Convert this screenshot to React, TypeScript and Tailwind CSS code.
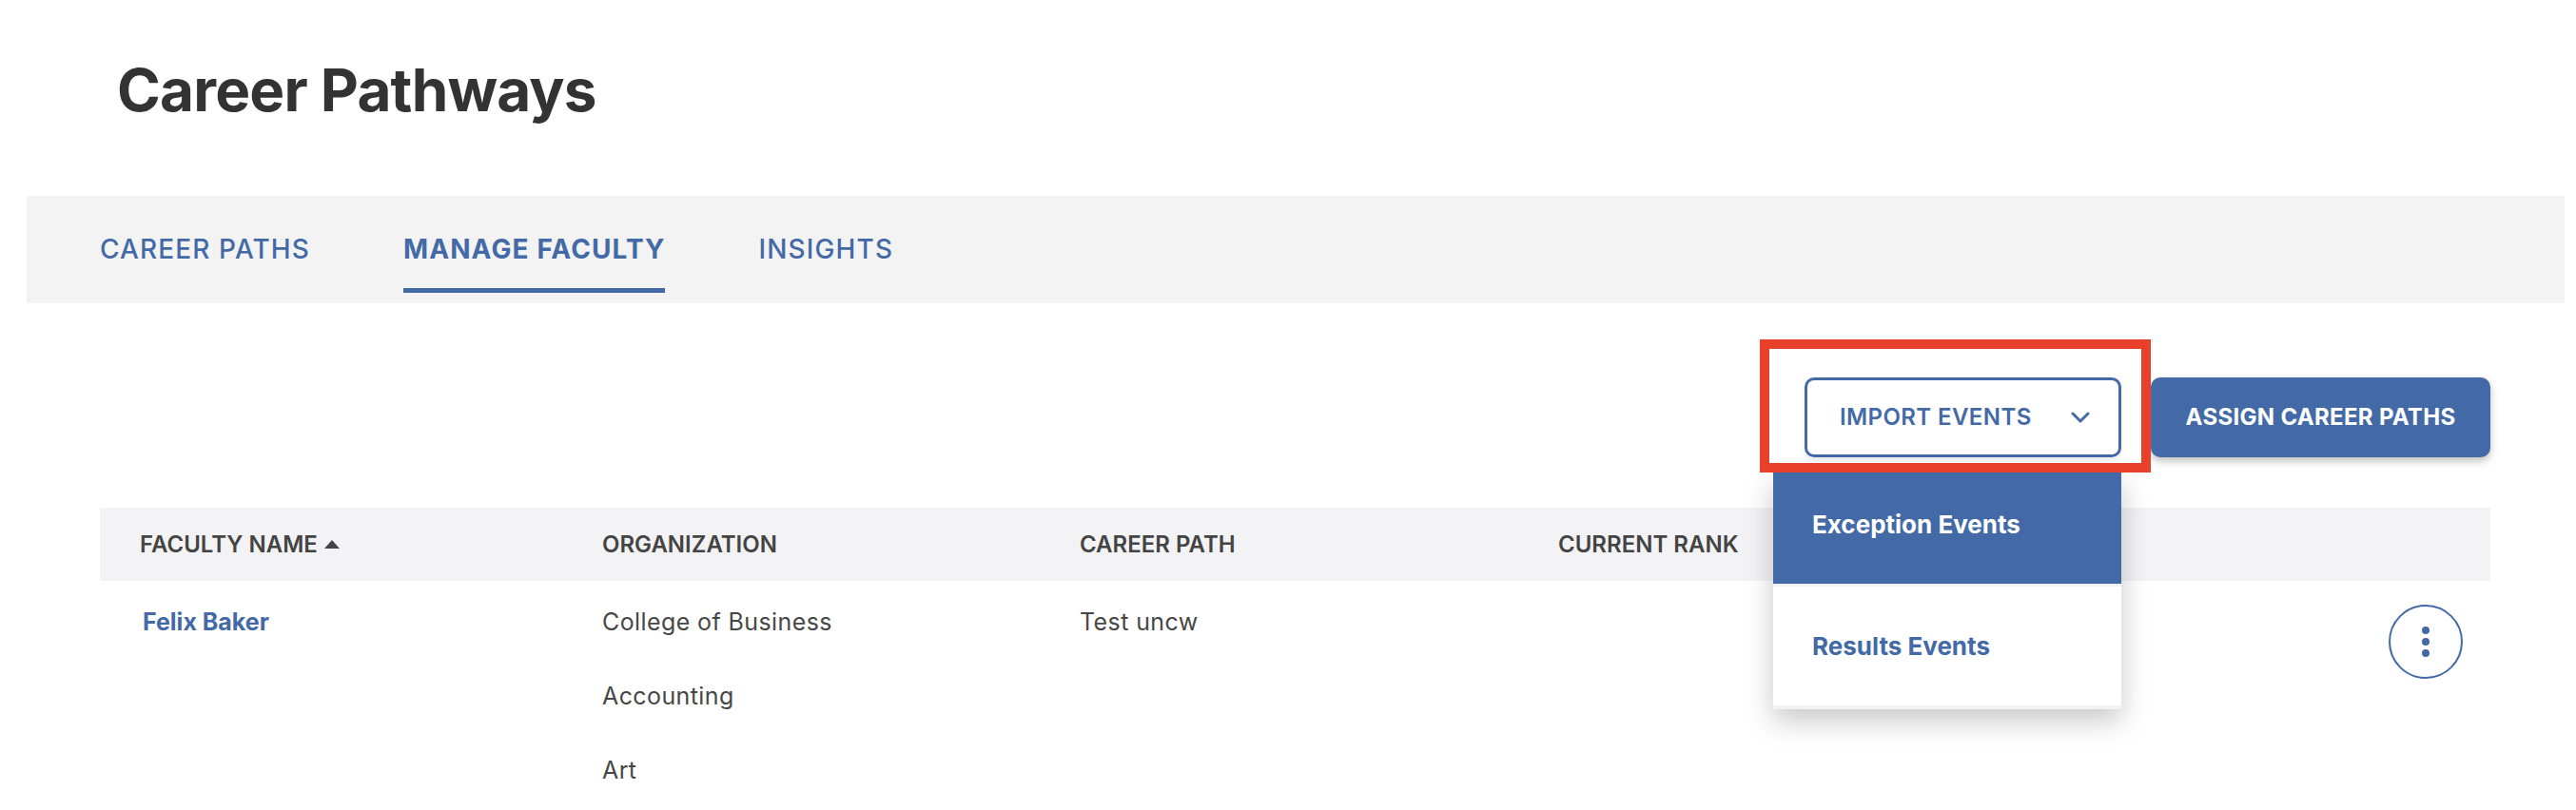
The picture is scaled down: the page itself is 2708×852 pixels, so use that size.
import React from "react";

const BLUE = "#436aa6";

function Chevron() {
  return (
    <svg width="20" height="12" viewBox="0 0 20 12" fill="none">
      <polyline points="2,2 10,10 18,2" stroke={BLUE} strokeWidth="3" strokeLinecap="round" strokeLinejoin="round" />
    </svg>
  );
}

function SortUp() {
  return (
    <svg width="16" height="9" viewBox="0 0 16 9" className="ml-[7px]">
      <polygon points="8,0 16,9 0,9" fill="#444" />
    </svg>
  );
}

function Tabs() {
  const tabs = [
    { label: "CAREER PATHS", active: false },
    { label: "MANAGE FACULTY", active: true },
    { label: "INSIGHTS", active: false },
  ];
  return (
    <nav className="mt-[80px] ml-[28px] mr-[12px] h-[113px] bg-[#f3f3f3] flex gap-[98px] pl-[77px]">
      {tabs.map((t) => (
        <div key={t.label} className="flex flex-col pt-[42px]">
          <span className={`text-[28px] leading-none tracking-[1.1px] text-[#436aa6] ${t.active ? "font-bold" : "font-medium"}`}>
            {t.label}
          </span>
          <div className={`mt-[27px] h-[5px] mr-[1px] ${t.active ? "bg-[#436aa6]" : "bg-transparent"}`} />
        </div>
      ))}
    </nav>
  );
}

function ImportMenu() {
  return (
    <div className="relative">
      <button className="h-[84px] w-[333px] rounded-[10px] border-[3px] border-[#436aa6] bg-white shadow-[0_4px_6px_rgba(0,0,0,0.08)] flex items-center justify-between pl-[34px] pr-[30px]">
        <span className="text-[24px] font-semibold leading-none tracking-[0.4px] text-[#436aa6]">IMPORT EVENTS</span>
        <Chevron />
      </button>
      {/* dropdown */}
      <div className="absolute left-[-33px] top-[100px] z-10 w-[366px] bg-[#f3f3f3] flex flex-col gap-[3px] pb-[4px] shadow-[0_12px_28px_rgba(0,0,0,0.22)]">
        <div className="h-[117px] bg-[#436aa6] flex items-center pl-[41px] pb-[8px]">
          <span className="text-[26px] font-bold leading-none text-white">Exception Events</span>
        </div>
        <div className="h-[125px] bg-white flex items-center pl-[41px]">
          <span className="text-[26px] font-bold leading-none text-[#436aa6]">Results Events</span>
        </div>
      </div>
      {/* highlight box */}
      <div className="absolute left-[-47px] top-[-40px] z-20 w-[411px] h-[140px] border-[10px] border-[#e8402b] pointer-events-none" />
    </div>
  );
}

function Kebab() {
  return (
    <button className="w-[78px] h-[78px] rounded-full border-2 border-[#436aa6] flex flex-col items-center justify-center gap-[4px]">
      <span className="w-[8px] h-[8px] rounded-full bg-[#436aa6]" />
      <span className="w-[8px] h-[8px] rounded-full bg-[#436aa6]" />
      <span className="w-[8px] h-[8px] rounded-full bg-[#436aa6]" />
    </button>
  );
}

function FacultyTable() {
  const cols = "grid grid-cols-[486px_502px_503px_1fr] pl-[42px]";
  return (
    <div className="mt-[53px]">
      <div className={`${cols} h-[77px] items-center bg-[#f3f3f5] text-[24px] font-semibold leading-none text-[#444]`}>
        <div className="flex items-center">
          FACULTY NAME
          <SortUp />
        </div>
        <div>ORGANIZATION</div>
        <div>CAREER PATH</div>
        <div>CURRENT RANK</div>
      </div>
      <div className={`${cols} text-[25px] leading-none tracking-[0.4px] text-[#474747]`}>
        <div className="pt-[31px] pl-[3px] font-bold tracking-normal text-[#436aa6]">Felix Baker</div>
        <div className="pt-[31px] flex flex-col gap-[53px]">
          <span>College of Business</span>
          <span>Accounting</span>
          <span>Art</span>
        </div>
        <div className="pt-[31px]">Test uncw</div>
        <div className="pt-[25px] flex justify-end pr-[29px]">
          <Kebab />
        </div>
      </div>
    </div>
  );
}

export default function App() {
  return (
    <div className="min-h-[852px] w-full overflow-hidden bg-white font-['Inter','Noto_Sans',sans-serif]">
      <h1 className="pl-[123px] pt-[64px] text-[62px] font-bold leading-none tracking-[-0.8px] text-[#333]">Career Pathways</h1>
      <Tabs />
      <div className="ml-[105px] mr-[90px]">
        <div className="mt-[78px] flex justify-end gap-[31px]">
          <ImportMenu />
          <button className="h-[84px] w-[357px] rounded-[10px] bg-[#436aa6] shadow-[0_4px_8px_rgba(0,0,0,0.25)] text-[24px] font-bold leading-none tracking-[0.3px] text-white">
            ASSIGN CAREER PATHS
          </button>
        </div>
        <FacultyTable />
      </div>
    </div>
  );
}
